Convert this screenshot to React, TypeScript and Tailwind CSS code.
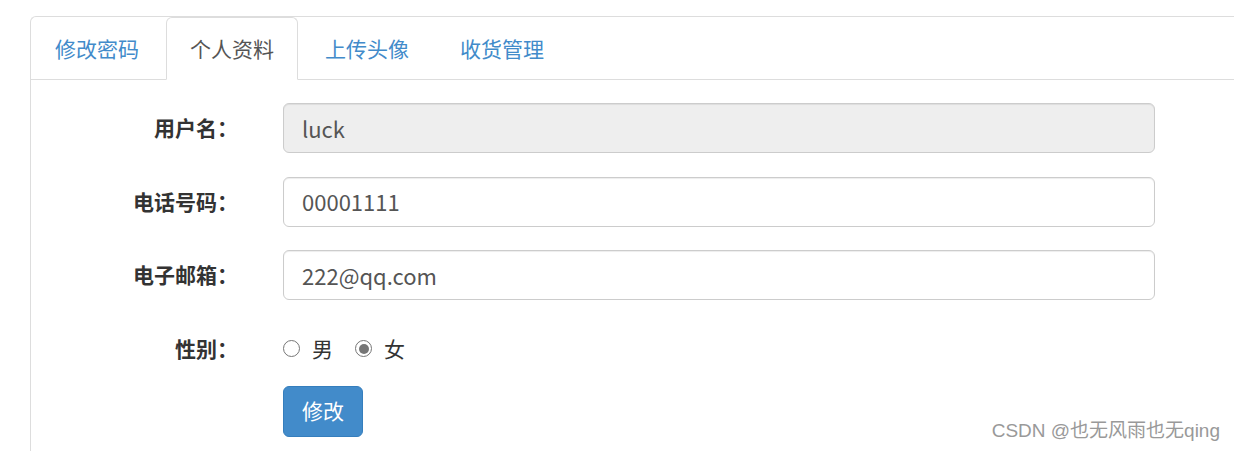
const tabs = ["修改密码", "个人资料", "上传头像", "收货管理"];

const fields = [
  { label: "用户名：", value: "luck", disabled: true },
  { label: "电话号码：", value: "00001111", disabled: false },
  { label: "电子邮箱：", value: "222@qq.com", disabled: false },
];

const Radio = ({ checked, label }: { checked: boolean; label: string }) => (
  <label className="flex items-center">
    <span className="flex h-[17px] w-[17px] items-center justify-center rounded-full border-[1.5px] border-[#767676] bg-white">
      {checked && <span className="h-[10px] w-[10px] rounded-full bg-[#767676]" />}
    </span>
    <span className="ml-[12px] text-[21px] text-[#333]">{label}</span>
  </label>
);

export default function App() {
  return (
    <div
      className="relative h-[451px] w-[1234px] overflow-hidden bg-white pl-[30px] pt-[16px]"
      style={{ fontFamily: '"Noto Sans CJK SC", "Noto Sans", sans-serif' }}
    >
      <div className="h-full rounded-tl-md border-l border-t border-[#ddd]">
        {/* tabs */}
        <ul className="flex h-[63px] border-b border-[#ddd]">
          {tabs.map((t) => {
            const active = t === "个人资料";
            return (
              <li key={t} className="mr-[3px] -mb-px">
                <span
                  className={
                    active
                      ? "flex h-[63px] items-center rounded-t-md border border-b-white border-[#ddd] bg-white px-[23px] text-[21px] leading-none text-[#555]"
                      : "flex h-[63px] items-center border border-transparent px-[23px] text-[21px] leading-none text-[#428bca]"
                  }
                >
                  {t}
                </span>
              </li>
            );
          })}
        </ul>

        {/* form */}
        <div className="pt-[23px]">
          {fields.map((f) => (
            <div key={f.label} className="mb-[23.5px] flex items-center">
              <div className="w-[207px] text-right text-[21px] font-bold text-[#333]">{f.label}</div>
              <div
                className={
                  f.disabled
                    ? "ml-[45px] flex h-[50px] w-[872px] items-center rounded-md border border-[#ccc] bg-[#eee] px-[18px] text-[22px] text-[#555] shadow-[inset_0_1px_1px_rgba(0,0,0,0.075)]"
                    : "ml-[45px] flex h-[50px] w-[872px] items-center rounded-md border border-[#ccc] bg-white px-[18px] text-[22px] text-[#555] shadow-[inset_0_1px_1px_rgba(0,0,0,0.075)]"
                }
              >
                {f.value}
              </div>
            </div>
          ))}

          <div className="flex h-[50px] items-center">
            <div className="w-[207px] text-right text-[21px] font-bold text-[#333]">性别：</div>
            <div className="ml-[45px] flex items-center gap-[22px]">
              <Radio checked={false} label="男" />
              <Radio checked={true} label="女" />
            </div>
          </div>

          <div className="mt-[12px] pl-[252px]">
            <button className="flex h-[51px] items-center rounded-md border border-[#357ebd] bg-[#428bca] px-[18px] text-[21px] text-white">
              修改
            </button>
          </div>
        </div>
      </div>

      {/* watermark */}
      <div
        className="absolute right-[14px] top-[417px] text-[19px] text-[#999] [text-shadow:0_1px_1px_#fff]"
        style={{ fontFamily: '"Liberation Sans", "Noto Sans CJK SC", sans-serif' }}
      >
        CSDN @也无风雨也无qing
      </div>
    </div>
  );
}
